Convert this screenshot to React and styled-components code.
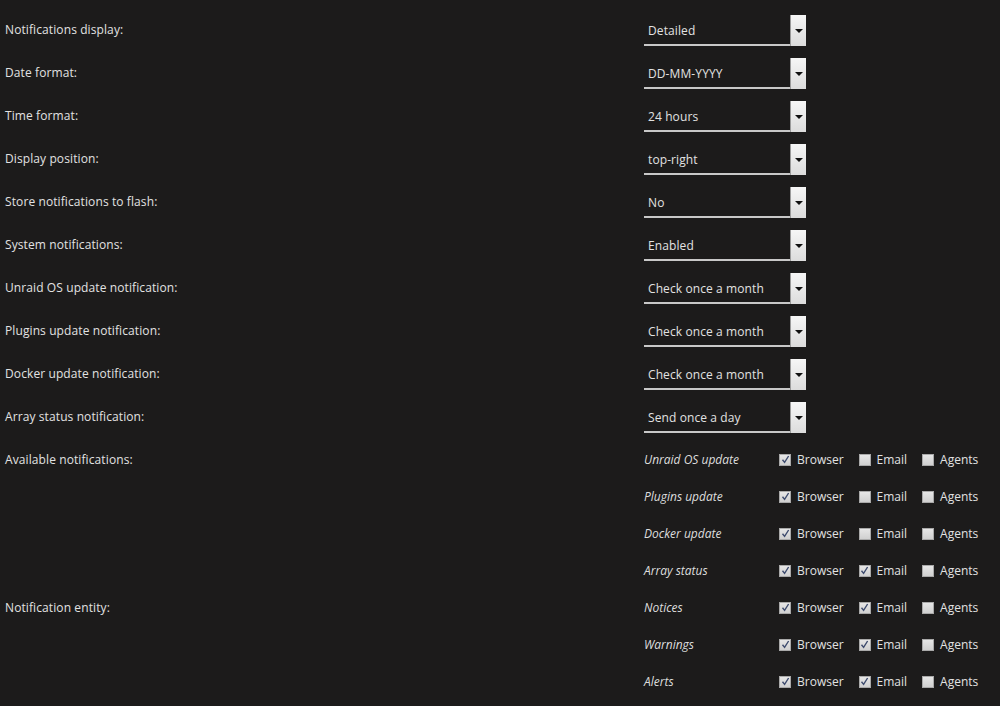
import styled, { createGlobalStyle } from 'styled-components';

const GlobalStyle = createGlobalStyle`
    html, body {
        margin: 0;
        padding: 0;
        background: #1c1b1b;
    }
    body {
        font-family: "Open Sans", "Liberation Sans", sans-serif;
        font-size: 12px;
        color: #e2e2e2;
    }
`

const Page = styled.div`
    width: 1000px;
    height: 706px;
    overflow: hidden;
    padding: 9px 0 0 5px;
    box-sizing: border-box;
    background: #1c1b1b;
`

const Row = styled.div`
    display: grid;
    grid-template-columns: 639px 1fr;
    align-items: ${(p) => (p.$top ? 'start' : 'center')};
    min-height: 43px;
    padding-top: ${(p) => p.$pad || 0}px;
`

const Label = styled.div`
    line-height: 16px;
    padding-top: ${(p) => (p.$top ? '11px' : '0')};
    margin-top: ${(p) => (p.$top ? '0' : '-1px')};
    letter-spacing: 0.1px;
`

const SelectBox = styled.div`
    display: flex;
    width: 162px;
    height: 31px;
    align-items: stretch;
`

const SelectText = styled.div`
    flex: 1;
    display: flex;
    align-items: center;
    padding-left: 4px;
    padding-top: 1px;
    border-bottom: 2px solid #c8c8c8;
    box-sizing: border-box;
    white-space: nowrap;
    letter-spacing: 0.1px;
`

const SelectButton = styled.div`
    width: 16px;
    display: flex;
    align-items: center;
    justify-content: center;
    background: linear-gradient(to bottom, #f6f6f6, #dcdcdc);
    border-left: 1px solid #9a9a9a;
    box-sizing: border-box;
`

const Arrow = styled.span`
    width: 0;
    height: 0;
    border-left: 4px solid transparent;
    border-right: 4px solid transparent;
    border-top: 4px solid #111;
`

const Options = styled.div`
    display: flex;
    flex-direction: column;
`

const OptionRow = styled.div`
    display: flex;
    align-items: center;
    height: 37px;
`

const OptionName = styled.div`
    width: 135px;
    font-style: italic;
    color: #dedede;
`

const Check = styled.label`
    display: flex;
    align-items: center;
    gap: 6px;
    margin-right: 15px;
`

const Box = styled.span`
    width: 12px;
    height: 12px;
    box-sizing: border-box;
    background: linear-gradient(to bottom, #e6e6e6, #d0d0d0);
    border: 1px solid #a9a9a9;
    display: flex;
    align-items: center;
    justify-content: center;
`

const Checkmark = () => (
    <svg width="9" height="9" viewBox="0 0 9 9">
        <path d="M1.5 4.8 L3.6 7.4 L7.6 1" fill="none" stroke="#3d4b6e" strokeWidth="1.4" />
    </svg>
)

const selects = [
    ['Notifications display:', 'Detailed'],
    ['Date format:', 'DD-MM-YYYY'],
    ['Time format:', '24 hours'],
    ['Display position:', 'top-right'],
    ['Store notifications to flash:', 'No'],
    ['System notifications:', 'Enabled'],
    ['Unraid OS update notification:', 'Check once a month'],
    ['Plugins update notification:', 'Check once a month'],
    ['Docker update notification:', 'Check once a month'],
    ['Array status notification:', 'Send once a day'],
]

const available = [
    ['Unraid OS update', true, false, false],
    ['Plugins update', true, false, false],
    ['Docker update', true, false, false],
    ['Array status', true, true, false],
]

const entity = [
    ['Notices', true, true, false],
    ['Warnings', true, true, false],
    ['Alerts', true, true, false],
]

const CheckItem = ({ on, text }) => (
    <Check>
        <Box>{on && <Checkmark />}</Box>
        <span>{text}</span>
    </Check>
)

const OptionList = ({ items }) => (
    <Options>
        {items.map((v, i) => (
            <OptionRow key={i}>
                <OptionName>{v[0]}</OptionName>
                <CheckItem on={v[1]} text="Browser" />
                <CheckItem on={v[2]} text="Email" />
                <CheckItem on={v[3]} text="Agents" />
            </OptionRow>
        ))}
    </Options>
)

const App = () => {
    return (
        <>
            <GlobalStyle />
            <Page>
                {selects.map((v, i) => (
                    <Row key={i}>
                        <Label>{v[0]}</Label>
                        <SelectBox>
                            <SelectText>{v[1]}</SelectText>
                            <SelectButton><Arrow /></SelectButton>
                        </SelectBox>
                    </Row>
                ))}
                <Row $top $pad={2}>
                    <Label $top>Available notifications:</Label>
                    <OptionList items={available} />
                </Row>
                <Row $top>
                    <Label $top>Notification entity:</Label>
                    <OptionList items={entity} />
                </Row>
            </Page>
        </>
    )
}

export default App;
